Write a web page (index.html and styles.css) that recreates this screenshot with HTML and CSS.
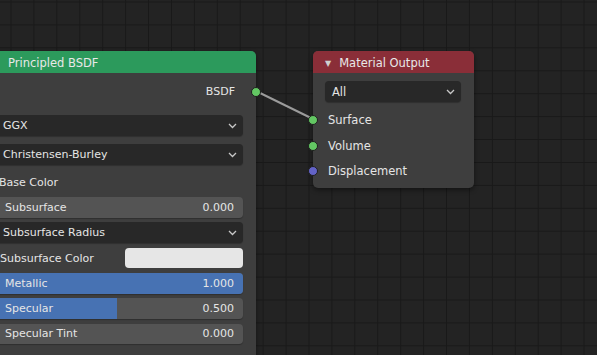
FILE: index.html
```html
<!DOCTYPE html>
<html lang="en">
<head>
    <meta charset="UTF-8">
    <meta name="viewport" content="width=device-width, initial-scale=1.0">
    <title>Shader Editor</title>
    <link rel="stylesheet" href="styles.css">
</head>
<body>
    <div class="canvas">
        <svg class="links" width="597" height="355">
            <line x1="256" y1="91" x2="313" y2="119" stroke="#9b9b9b" stroke-width="2" stroke-linecap="round"/>
        </svg>

        <!-- Principled BSDF node -->
        <div class="node bsdf-node">
            <div class="node-header green">Principled BSDF</div>
            <div class="node-body">
                <div class="row output-row">BSDF<span class="socket green-socket right-socket"></span></div>
                <div class="dropdown first">GGX<svg class="chevron" width="9" height="6"><polyline points="1,1 4.5,4.5 8,1" fill="none" stroke="#c8c8c8" stroke-width="1.3"/></svg></div>
                <div class="dropdown tight">Christensen-Burley<svg class="chevron" width="9" height="6"><polyline points="1,1 4.5,4.5 8,1" fill="none" stroke="#c8c8c8" stroke-width="1.3"/></svg></div>
                <div class="row label-row">Base Color</div>
                <div class="slider"><span>Subsurface</span><span>0.000</span></div>
                <div class="dropdown">Subsurface Radius<svg class="chevron" width="9" height="6"><polyline points="1,1 4.5,4.5 8,1" fill="none" stroke="#c8c8c8" stroke-width="1.3"/></svg></div>
                <div class="row color-row"><span>Subsurface Color</span><div class="swatch"></div></div>
                <div class="slider"><div class="fill" style="width: 100%"></div><span>Metallic</span><span>1.000</span></div>
                <div class="slider"><div class="fill" style="width: 49%"></div><span>Specular</span><span>0.500</span></div>
                <div class="slider"><span>Specular Tint</span><span>0.000</span></div>
            </div>
        </div>

        <!-- Material Output node -->
        <div class="node output-node">
            <div class="node-header red"><span class="collapse">&#9660;</span>Material Output</div>
            <div class="node-body">
                <div class="dropdown first-out">All<svg class="chevron" width="9" height="6"><polyline points="1,1 4.5,4.5 8,1" fill="none" stroke="#c8c8c8" stroke-width="1.3"/></svg></div>
                <div class="row input-row"><span class="socket green-socket left-socket"></span>Surface</div>
                <div class="row input-row"><span class="socket green-socket left-socket"></span>Volume</div>
                <div class="row input-row"><span class="socket blue-socket left-socket"></span>Displacement</div>
            </div>
        </div>
    </div>
</body>
</html>
```

FILE: styles.css
```css
body {
    margin: 0;
    overflow: hidden;
    font-family: "DejaVu Sans", sans-serif;
    font-size: 11px;
    color: #e5e5e5;
    background-color: #232323;
}
.canvas {
    position: relative;
    width: 597px;
    height: 355px;
    overflow: hidden;
    background-color: #232323;
    background-image:
        linear-gradient(to right, #191919 1px, transparent 1px),
        linear-gradient(to bottom, #191919 1px, transparent 1px);
    background-size: 22.93px 22.93px;
    background-position: 10.5px 1.5px;
}
.links {
    position: absolute;
    left: 0;
    top: 0;
}
.node {
    position: absolute;
    background-color: #3e3e3e;
    border-radius: 5px;
    box-shadow: 0px 2px 5px rgba(0, 0, 0, 0.45);
}
.bsdf-node {
    left: -12px;
    top: 51px;
    width: 268px;
    height: 330px;
}
.output-node {
    left: 313px;
    top: 51px;
    width: 161px;
    height: 137px;
}
.node-header {
    height: 22px;
    line-height: 24px;
    border-radius: 5px 5px 0 0;
    color: #e8e8e8;
    font-size: 11.5px;
}
.green {
    background-color: #2c9a5c;
    padding-left: 20px;
}
.red {
    background-color: #8a2e38;
    padding-left: 12px;
}
.collapse {
    font-size: 8px;
    color: #d0d0d0;
    margin-right: 8px;
    position: relative;
    top: -1px;
}
.node-body {
    display: flex;
    flex-direction: column;
    padding: 0 13px 0 8px;
}
.output-node .node-body {
    padding: 0 13px 0 12px;
}
.row {
    position: relative;
    height: 21px;
    display: flex;
    align-items: center;
}
.output-row {
    margin-top: 8px;
    justify-content: flex-end;
    padding-right: 8px;
}
.label-row {
    margin-top: 7px;
    padding-left: 3px;
}
.color-row {
    justify-content: space-between;
    margin-top: 4.5px;
    padding-left: 4px;
}
.swatch {
    width: 118px;
    height: 20px;
    border-radius: 4px;
    background-color: #e6e6e6;
}
.dropdown {
    position: relative;
    height: 21px;
    display: flex;
    align-items: center;
    justify-content: space-between;
    padding: 0 6px 0 7px;
    background-color: #282828;
    border-radius: 4px;
    margin-top: 4.5px;
    box-shadow: 0 1px 1px rgba(0, 0, 0, 0.25);
}
.dropdown.first {
    margin-top: 13px;
}
.dropdown.tight {
    margin-top: 8px;
}
.dropdown.first-out {
    margin-top: 8px;
    padding-left: 7px;
    font-size: 11.5px;
}
.slider {
    position: relative;
    height: 20.5px;
    display: flex;
    align-items: center;
    justify-content: space-between;
    padding: 0 9px 0 9px;
    background-color: #545454;
    border-radius: 4px;
    margin-top: 4.7px;
    overflow: hidden;
    box-shadow: 0 1px 1px rgba(0, 0, 0, 0.25);
}
.label-row + .slider {
    margin-top: 4px;
}
.slider span {
    position: relative;
}
.fill {
    position: absolute;
    left: 0;
    top: 0;
    bottom: 0;
    background-color: #4772b3;
}
.input-row {
    margin-top: 4.5px;
    padding-left: 3px;
    font-size: 11.5px;
}
.input-row:nth-child(2) {
    margin-top: 7.5px;
}
.socket {
    position: absolute;
    top: 50%;
    width: 8px;
    height: 8px;
    margin-top: -5px;
    border-radius: 50%;
    border: 1px solid #1e1e1e;
}
.green-socket {
    background-color: #63c763;
}
.blue-socket {
    background-color: #6363c7;
}
.right-socket {
    right: -18px;
}
.left-socket {
    left: -17px;
}
```
